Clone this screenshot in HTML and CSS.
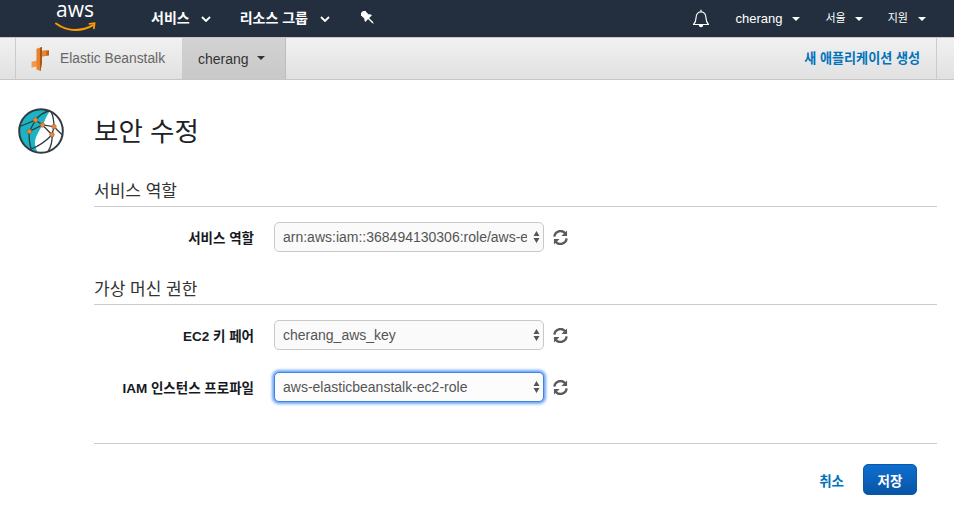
FILE: index.html
```html
<!DOCTYPE html>
<html lang="ko">
<head>
<meta charset="utf-8">
<title>보안 수정</title>
<link rel="stylesheet" href="styles.css">
</head>
<body>
<header class="topnav">
  <svg class="aws" viewBox="0 0 44 30" width="44" height="30">
    <text class="aws-text" x="1" y="15">aws</text>
    <path d="M1 21.500C8 26.500 14 28 20 28c7 0 13-1.700 18-4.800" fill="none" stroke="#f90" stroke-width="2" stroke-linecap="round"/>
    <path d="M34.500 21.800l5-.6-.6 5.200" fill="none" stroke="#f90" stroke-width="1.800" stroke-linecap="round"/>
  </svg>
  <a class="nav-item strong svc">서비스<svg class="chev" viewBox="0 0 10 6" width="10" height="6"><path d="M1 1l4 4 4-4" fill="none" stroke="#fff" stroke-width="1.800"/></svg></a>
  <a class="nav-item strong grp">리소스 그룹<svg class="chev" viewBox="0 0 10 6" width="10" height="6"><path d="M1 1l4 4 4-4" fill="none" stroke="#fff" stroke-width="1.800"/></svg></a>
  <svg class="pin" viewBox="0 0 14 14" width="14" height="14"><g transform="rotate(-45 7 7)"><path d="M3 -1.500h8v2l-1 .5v4c1 .6 1.500 1.500 1.800 2.800H2.200C2.500 6.500 3 5.600 4 5V1L3 .5z" fill="#fff"/><path d="M6.300 7h1.400v6.500l-.7 1.500-.7-1.500z" fill="#fff"/></g></svg>
  <div class="nav-right">
    <svg class="bell" viewBox="0 0 18 19" width="18" height="19"><path d="M1.500 15.500c1.800-1.800 2.500-3 2.500-6.500 0-3.500 2-6.200 5-6.200s5 2.700 5 6.200c0 3.500.7 4.700 2.500 6.500z" fill="none" stroke="#fff" stroke-width="1.200" stroke-linejoin="round"/><path d="M9 .8v2" stroke="#fff" stroke-width="1.200"/><path d="M6.800 16h4.400a2.200 2.200 0 0 1-4.400 0z" fill="#fff"/></svg>
    <a class="nav-item user">cherang<span class="caret-w"></span></a>
    <a class="nav-item tiny region"><span class="ko">서울</span><span class="caret-w"></span></a>
    <a class="nav-item tiny help"><span class="ko">지원</span><span class="caret-w"></span></a>
  </div>
</header>
<nav class="subnav">
  <div class="crumb">
    <svg class="eb" viewBox="0 0 20 26" width="20" height="26">
      <path d="M11 5l8-.8v5.300l-8 1z" fill="#b85f1c"/>
      <path d="M11 5l5.500-.5v5.300l-5.500.7z" fill="#ea8430"/>
      <path d="M1.500 15.800l5.500-1.300v6l-5.500 1z" fill="#f19a4e"/>
      <path d="M6.500 2.800L12 1v16l-1.500 8-4-1.500z" fill="#e8812a"/>
      <path d="M10 1.700L12 1v16l-1.500 8-.5-.2z" fill="#a9561a"/>
    </svg>
    <span class="crumb-text">Elastic Beanstalk</span>
  </div>
  <div class="app-tab">cherang<span class="caret-d"></span></div>
  <div class="sub-right"><a class="new-app">새 애플리케이션 생성</a></div>
</nav>
<main class="page">
  <svg class="globe" viewBox="0 0 46 46" width="46" height="46">
    <circle cx="23" cy="23" r="22" fill="#fff"/>
    <path d="M20 44.500A21.800 21.800 0 1 1 32 3.100C29 7 27 12 25 16.500 20 24 16.500 31 17 36c.3 3.500 1.500 6.500 3 8.500z" fill="#1ab4c4"/>
    <g fill="none" stroke="#2f3a40" stroke-width="1.300">
      <path d="M1.800 18.500L17.500 12C21 7.500 26 4 32 2.500"/>
      <path d="M17.500 12l7 5 11.500 1.700-2 8C28 33 21 38 13 41"/>
      <path d="M36 18.700l8 8M34 26.700c.5 6-1 12-4 17M24.500 17L11.300 23.500c-.6 6 .2 12 2 18M17.500 12l-6.200 11.500M24.500 17l9.500 9.700M36 18.700c0-6-1-11-3-15.500"/>
    </g>
    <circle cx="23" cy="23" r="21.800" fill="none" stroke="#333b40" stroke-width="2"/>
    <g fill="#f58536" stroke="#8a5a30" stroke-width=".5">
      <circle cx="17.500" cy="12" r="2.300"/><circle cx="24.500" cy="17" r="2.300"/><circle cx="36" cy="18.700" r="2.300"/><circle cx="34" cy="26.700" r="2.300"/><circle cx="11.300" cy="23.500" r="2.300"/>
    </g>
  </svg>
  <form class="content">
    <h1 class="title">보안 수정</h1>
    <h2 class="section sec-a">서비스 역할</h2>
    <div class="row first">
      <label class="lbl">서비스 역할</label>
      <div class="sel-wrap"><select class="sel"><option>arn:aws:iam::368494130306:role/aws-elasticbeanstalk-service-role</option></select><svg class="updown" viewBox="0 0 7 12" width="7" height="12"><path d="M3.500 0l3 5H.5zM3.500 12l-3-5h6z" fill="#555"/></svg></div>
      <svg class="refresh" viewBox="0 0 16 16" width="15" height="15"><use href="#rf"/></svg>
    </div>
    <h2 class="section sec-b">가상 머신 권한</h2>
    <div class="row first">
      <label class="lbl">EC2 키 페어</label>
      <div class="sel-wrap"><select class="sel"><option>cherang_aws_key</option></select><svg class="updown" viewBox="0 0 7 12" width="7" height="12"><path d="M3.500 0l3 5H.5zM3.500 12l-3-5h6z" fill="#555"/></svg></div>
      <svg class="refresh" viewBox="0 0 16 16" width="15" height="15"><use href="#rf"/></svg>
    </div>
    <div class="row next">
      <label class="lbl">IAM 인스턴스 프로파일</label>
      <div class="sel-wrap"><select class="sel focus"><option>aws-elasticbeanstalk-ec2-role</option></select><svg class="updown" viewBox="0 0 7 12" width="7" height="12"><path d="M3.500 0l3 5H.5zM3.500 12l-3-5h6z" fill="#555"/></svg></div>
      <svg class="refresh" viewBox="0 0 16 16" width="15" height="15"><use href="#rf"/></svg>
    </div>
    <div class="actions">
      <a class="cancel">취소</a>
      <button type="button" class="save">저장</button>
    </div>
  </form>
</main>
<svg class="defs" width="0" height="0"><defs><g id="rf"><path d="M1.500 7A6.500 6.500 0 0 1 13 3.500" fill="none" stroke="#5a5a5a" stroke-width="2.500"/><path d="M15 .5V6.500H9z" fill="#5a5a5a"/><path d="M14.500 9A6.500 6.500 0 0 1 3 12.500" fill="none" stroke="#5a5a5a" stroke-width="2.500"/><path d="M1 15.500V9.500H7z" fill="#5a5a5a"/></g></defs></svg>
</body>
</html>
```

FILE: styles.css
```css
* { box-sizing: border-box; }
html, body { margin: 0; padding: 0; }
body {
  width: 954px;
  height: 508px;
  overflow: hidden;
  background: #fff;
  color: #16191f;
  font-family: "Liberation Sans", "Noto Sans CJK KR", sans-serif;
}
.defs { display: block; height: 0; }

.topnav {
  height: 37px;
  background: #232f3e;
  display: flex;
  align-items: center;
  color: #fff;
  font-size: 13px;
}
.aws { margin: 0 0 3px 55px; overflow: visible; flex: none; }
.aws-text { font: 21px "Open Sans", "Liberation Sans", sans-serif; fill: #fff; }
.nav-item { display: flex; align-items: center; color: #fff; }
.strong { font-size: 14px; font-weight: 700; padding-bottom: 3px; }
.strong .chev { margin-top: 3px; }
.svc { margin-left: 52px; gap: 11px; }
.grp { margin-left: 29px; gap: 12px; }
.pin { margin-left: 31px; margin-bottom: 2px; flex: none; }
.nav-right { margin-left: auto; display: flex; align-items: center; padding-right: 28px; }
.bell { margin-right: 26px; }
.tiny { font-size: 11px; }
.ko { padding-bottom: 3px; }
.user { gap: 9px; margin-right: 26px; }
.region { gap: 9px; margin-right: 25px; }
.help { gap: 10px; }
.caret-w, .caret-d {
  display: inline-block;
  width: 0; height: 0;
  border-left: 4px solid transparent;
  border-right: 4px solid transparent;
  border-top: 4px solid #fff;
}

.subnav {
  height: 43px;
  display: flex;
  align-items: stretch;
  background: linear-gradient(#f1f1f1, #e1e1e1);
  border-top: 1px solid #c8c8c8;
  border-bottom: 1px solid #c6c6c6;
  padding-left: 15px;
}
.crumb {
  width: 167px;
  display: flex;
  align-items: center;
  border-left: 1px solid #cbcbcb;
  padding-left: 14px;
  gap: 10px;
}
.crumb-text { font-size: 13.800px; color: #666; }
.eb { flex: none; }
.app-tab {
  width: 104px;
  background: linear-gradient(#d2d2d2, #c9c9c9);
  border-right: 1px solid #bdbdbd;
  display: flex;
  align-items: center;
  padding-left: 16px;
  gap: 8px;
  font-size: 14px;
  color: #333;
}
.caret-d { border-top-color: #333; border-left-width: 4.500px; border-right-width: 4.500px; border-top-width: 4.500px; margin-bottom: 2px; }
.sub-right {
  margin-left: auto;
  width: 133px;
  border-right: 1px solid #cbcbcb;
  margin-right: 17px;
  display: flex;
  align-items: center;
  justify-content: flex-end;
  padding-right: 16px;
}
.new-app { color: #0073bb; font-size: 13.100px; font-weight: 700; white-space: nowrap; padding-bottom: 3px; }

.page { display: flex; padding: 27px 17px 0 18px; }
.globe { flex: none; margin-top: 1px; }
.content { flex: 1; margin-left: 30px; }
.title { margin: 8px 0 0; font-size: 26.500px; line-height: 35px; font-weight: 400; color: #1c2228; }
.section {
  height: 27px;
  line-height: 24px;
  font-size: 17px;
  font-weight: 400;
  color: #333;
  border-bottom: 1px solid #ccc;
}
.sec-a { margin: 30px 0 0; }
.sec-b { margin: 26px 0 0; }
.row { display: flex; align-items: center; height: 30px; }
.row.first { margin-top: 15px; }
.row.next { margin-top: 22px; }
.lbl { width: 160px; text-align: right; font-size: 13.500px; font-weight: 700; color: #16191f; white-space: nowrap; }
.sel-wrap { position: relative; width: 270px; height: 30px; margin-left: 20px; }
.sel {
  appearance: none;
  -webkit-appearance: none;
  display: block;
  width: 100%;
  height: 100%;
  padding: 0 16px 0 8px;
  border: 1px solid #c8c8c8;
  border-radius: 5px;
  background: #fafafa;
  color: #555;
  font: 14px "Liberation Sans", sans-serif;
  outline: none;
}
.sel.focus {
  background: #fcfcfc;
  border: 1px solid #3f83e0;
  box-shadow: 0 0 3px 2px #6aa5f5;
}
.updown { position: absolute; right: 4.500px; top: 9px; }
.refresh { margin-left: 9px; flex: none; }
.actions {
  margin-top: 41px;
  border-top: 1px solid #ccc;
  padding: 20px 20px 0 0;
  display: flex;
  justify-content: flex-end;
  align-items: center;
}
.cancel { color: #0073bb; font-size: 13.500px; font-weight: 700; margin-right: 19px; }
.save {
  width: 54px;
  height: 31px;
  border: 1px solid #0a59a8;
  border-radius: 5px;
  background: linear-gradient(#0f6fcf, #0855a6);
  color: #fff;
  font: 700 13.500px "Liberation Sans", "Noto Sans CJK KR", sans-serif;
  padding: 0;
}
```
